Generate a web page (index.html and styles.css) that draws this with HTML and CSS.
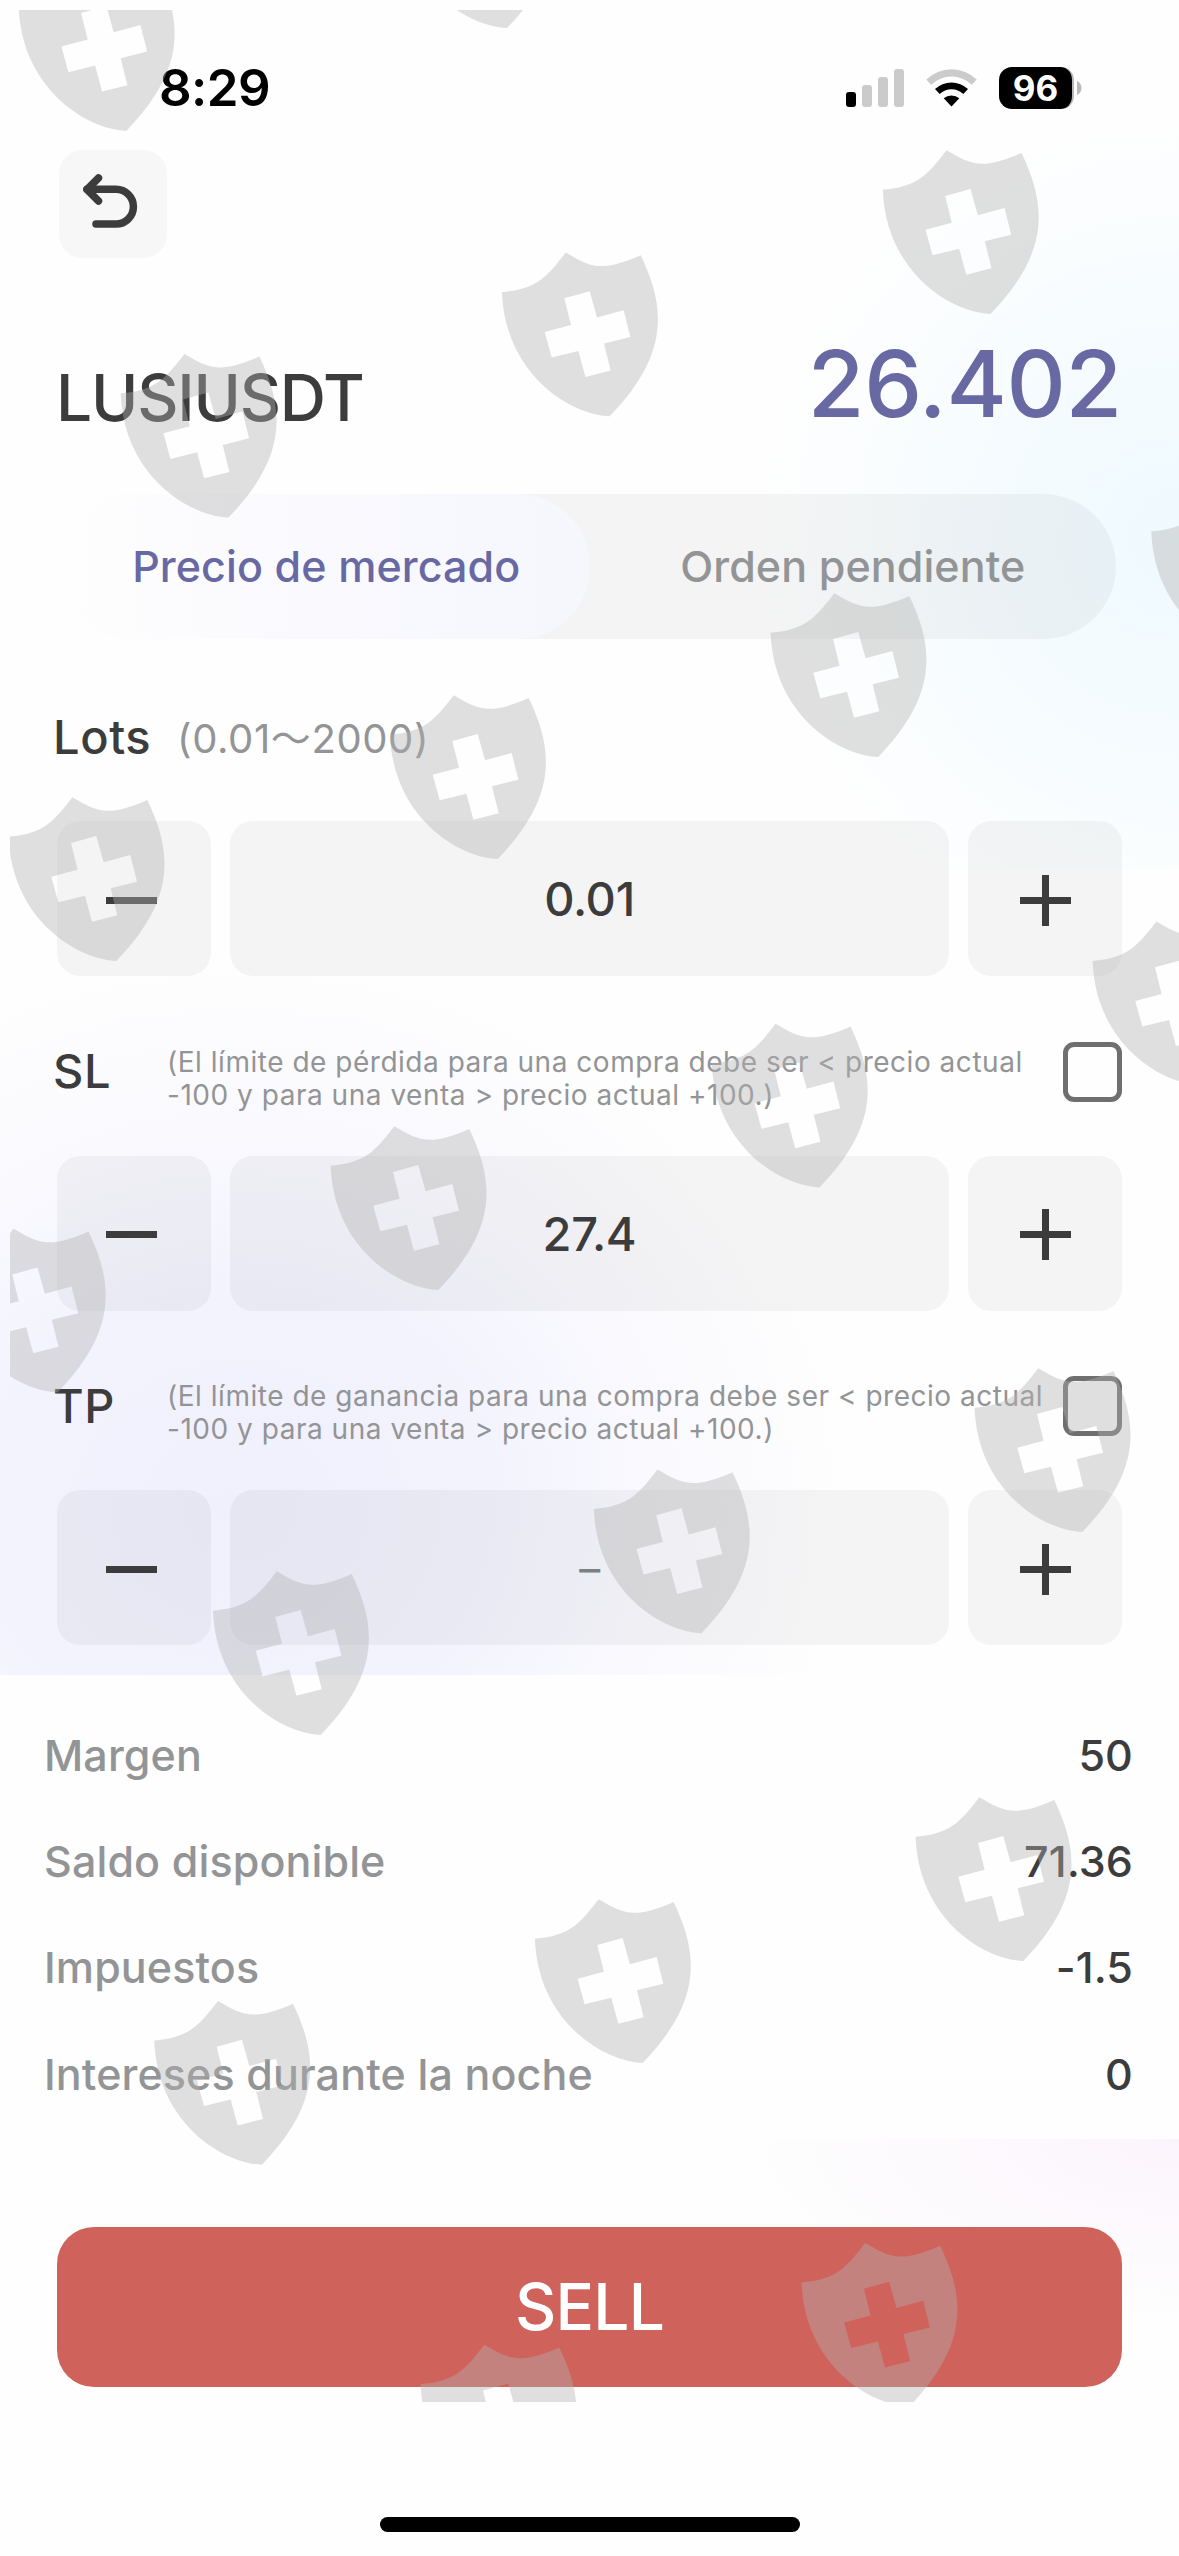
FILE: index.html
```html
<!DOCTYPE html>
<html lang="es">
<head>
	<meta charset="utf-8">
	<title>LUSIUSDT</title>
	<link rel="stylesheet" href="styles.css">
</head>
<body>
	<div class="page">
		<div class="status">
			<div class="time">8:29</div>
			<div class="status-icons">
				<svg width="58" height="38" viewBox="0 0 58 38">
					<rect x="0" y="23" width="10" height="15" rx="3" fill="#000"/>
					<rect x="16" y="16" width="10" height="22" rx="3" fill="#cbcbcb"/>
					<rect x="32" y="8" width="10" height="30" rx="3" fill="#cbcbcb"/>
					<rect x="48" y="0" width="10" height="38" rx="3" fill="#cbcbcb"/>
				</svg>
				<svg width="51" height="38" viewBox="0 0 51 38">
					<path d="M0.3 10.5A36 36 0 0 1 50.7 10.5L45.8 15.8A29 29 0 0 0 5.2 15.8Z" fill="#cbcbcb"/>
					<path d="M9 20A24 24 0 0 1 42 20L37.3 25A17 17 0 0 0 13.7 25Z" fill="#000"/>
					<path d="M17.7 29.3A12 12 0 0 1 33.3 29.3L25.5 37.5Z" fill="#000"/>
				</svg>
				<div class="battery">
					<span class="battery-level">96</span>
					<svg width="5" height="14" viewBox="0 0 5 14"><path d="M0 0C6 3 6 11 0 14Z" fill="#b9b9b9"/></svg>
				</div>
			</div>
		</div>

		<button class="back">
			<svg width="108" height="108" viewBox="59 150 108 108" fill="none" stroke="#3c3c3c" stroke-width="7.5" stroke-linecap="round" stroke-linejoin="round">
				<path d="M98.5 178L87 189.5L98.5 201"/>
				<path d="M87 189.3H116a17.3 17.3 0 0 1 0 34.8H96"/>
			</svg>
		</button>

		<div class="symbol-row">
			<div class="symbol">LUSIUSDT</div>
			<div class="price">26.402</div>
		</div>

		<div class="tabs">
			<div class="tab active">Precio de mercado</div>
			<div class="tab">Orden pendiente</div>
		</div>

		<div class="field-head lots-head">
			<div class="label">Lots</div>
			<div class="range">(0.01～2000)</div>
		</div>
		<div class="stepper">
			<button class="step minus"><svg width="51" height="51"><path d="M0 25.5H51" stroke="#3c3c3c" stroke-width="7"/></svg></button>
			<div class="value">0.01</div>
			<button class="step"><svg width="51" height="51"><path d="M0 25.5H51M25.5 0V51" stroke="#3c3c3c" stroke-width="7"/></svg></button>
		</div>

		<div class="field-head">
			<div class="label">SL</div>
			<div class="hint">(El límite de pérdida para una compra debe ser &lt; precio actual<br>-100 y para una venta &gt; precio actual +100.)</div>
			<div class="checkbox"></div>
		</div>
		<div class="stepper">
			<button class="step minus"><svg width="51" height="51"><path d="M0 25.5H51" stroke="#3c3c3c" stroke-width="7"/></svg></button>
			<div class="value">27.4</div>
			<button class="step"><svg width="51" height="51"><path d="M0 25.5H51M25.5 0V51" stroke="#3c3c3c" stroke-width="7"/></svg></button>
		</div>

		<div class="field-head">
			<div class="label">TP</div>
			<div class="hint">(El límite de ganancia para una compra debe ser &lt; precio actual<br>-100 y para una venta &gt; precio actual +100.)</div>
			<div class="checkbox"></div>
		</div>
		<div class="stepper">
			<button class="step minus"><svg width="51" height="51"><path d="M0 25.5H51" stroke="#3c3c3c" stroke-width="7"/></svg></button>
			<div class="value empty">–</div>
			<button class="step"><svg width="51" height="51"><path d="M0 25.5H51M25.5 0V51" stroke="#3c3c3c" stroke-width="7"/></svg></button>
		</div>

		<div class="summary">
			<div class="summary-row"><span>Margen</span><b>50</b></div>
			<div class="summary-row"><span>Saldo disponible</span><b>71.36</b></div>
			<div class="summary-row"><span>Impuestos</span><b>-1.5</b></div>
			<div class="summary-row"><span>Intereses durante la noche</span><b>0</b></div>
		</div>

		<button class="sell">SELL</button>
		<div class="home-bar"></div>

		<!-- shield watermark, every copy is placed by its bottom tip -->
		<svg class="watermark" width="1179" height="2556" viewBox="0 0 1179 2556">
			<defs>
				<clipPath id="area"><rect x="10" y="10" width="1169" height="2392"/></clipPath>
				<path id="shield" fill-rule="evenodd" d="M-107.7 -124.3C-73 -127 -63 -139 -44 -163.7C-20 -150 -10 -143 31 -161C56 -109 60 -62 0 0C-42 -2 -105 -44 -107.7 -124.3ZM-45.3 -118L-38.7 -91.3L-65 -84.3L-58 -58.7L-31.3 -65.3L-24.3 -39.3L1 -45.7L-5.7 -72.7L20.7 -79.3L14 -106L-12.7 -98.7L-20 -125Z"/>
			</defs>
			<g fill="#b2b2b2" fill-opacity="0.4" clip-path="url(#area)">
				<use href="#shield" x="126.4" y="130.9"/>
				<use href="#shield" x="507" y="28"/>
				<use href="#shield" x="228.4" y="517.6"/>
				<use href="#shield" x="609.7" y="416.3"/>
				<use href="#shield" x="990.5" y="314"/>
				<use href="#shield" x="116.3" y="961"/>
				<use href="#shield" x="497.7" y="859"/>
				<use href="#shield" x="878.3" y="757"/>
				<use href="#shield" x="1259" y="655.6"/>
				<use href="#shield" x="57.5" y="1392.5"/>
				<use href="#shield" x="438.3" y="1290"/>
				<use href="#shield" x="819.5" y="1187.5"/>
				<use href="#shield" x="1200.3" y="1085.3"/>
				<use href="#shield" x="320.7" y="1735"/>
				<use href="#shield" x="701.5" y="1633.3"/>
				<use href="#shield" x="1082.3" y="1532"/>
				<use href="#shield" x="262" y="2164.7"/>
				<use href="#shield" x="642.6" y="2063"/>
				<use href="#shield" x="1023.3" y="1961"/>
				<use href="#shield" x="528.3" y="2508.5"/>
				<use href="#shield" x="909.2" y="2406.7"/>
			</g>
		</svg>
	</div>
</body>
</html>
```
FILE: styles.css
```css
* {
	box-sizing: border-box;
}
body {
	margin: 0;
	background-color: #fff;
	color: #3c3c3c;
	font-family: Inter, "Noto Sans CJK SC", sans-serif;
	font-weight: 500;
}
button {
	border: none;
	padding: 0;
	font: inherit;
	color: inherit;
}
svg {
	display: block;
}
.page {
	position: relative;
	width: 1179px;
	height: 2556px;
	overflow: hidden;
	background-color: #fefefe;
	background-image:
		radial-gradient(ellipse 430px 430px at 430px 410px, #effafe 0%, #f4fbfe 40%, #fafdfe 70%, rgba(254, 254, 254, 0) 100%),
		radial-gradient(ellipse 610px 550px at 240px 550px, #f0f0fd 0%, #f3f3fe 40%, #fafafe 72%, rgba(254, 254, 254, 0) 100%),
		radial-gradient(ellipse 430px 180px at 430px 0, #fbf4fc 0%, rgba(254, 254, 254, 0) 100%);
	background-repeat: no-repeat;
	background-size: 430px 740px, 860px 715px, 430px 180px;
	background-position: 749px 130px, 0 960px, 749px 2139px;
}
.status {
	display: flex;
	justify-content: space-between;
	align-items: center;
	height: 150px;
	padding: 25px 97px 0 159px;
}
.time {
	color: #000;
	font-size: 51px;
	font-weight: 600;
	letter-spacing: -0.6px;
}
.status-icons {
	display: flex;
	align-items: center;
	gap: 22px;
}
.battery {
	display: flex;
	align-items: center;
	gap: 3px;
}
.battery-level {
	width: 75px;
	height: 42px;
	border-radius: 13px;
	border-right: 2px solid #b9b9b9;
	background-color: #000;
	color: #fff;
	font-size: 35px;
	font-weight: 700;
	line-height: 42px;
	text-align: center;
}
.back {
	display: block;
	width: 108px;
	height: 108px;
	margin-left: 59px;
	border-radius: 24px;
	background-color: #f7f7f7;
}
.symbol-row {
	display: flex;
	justify-content: space-between;
	height: 236px;
	padding: 75px 57px 0 56px;
}
.symbol {
	margin-top: 24px;
	font-size: 64px;
	line-height: 81px;
	font-weight: 450;
	letter-spacing: -1.2px;
}
.price {
	color: #6868a3;
	font-size: 92px;
	line-height: 101px;
	letter-spacing: -0.3px;
}
.tabs {
	display: flex;
	height: 145px;
	margin: 0 63px;
	border-radius: 73px;
	background-color: rgba(0, 0, 0, 0.039);
}
.tab {
	flex: 1;
	border-radius: 73px;
	color: #939496;
	font-size: 43px;
	line-height: 145px;
	letter-spacing: 0.1px;
	text-align: center;
}
.tab.active {
	color: #6868a3;
	background: linear-gradient(90deg, #fefefe, #f9f9fe 55%, #f5f7fd);
}
.field-head {
	display: flex;
	align-items: center;
	height: 179.5px;
	padding: 10px 57px 0 53px;
}
.lots-head {
	height: 182px;
	padding-top: 13px;
}
.label {
	flex: none;
	width: 114px;
	font-size: 47px;
	letter-spacing: 0.6px;
}
.range {
	margin-left: 10px;
	margin-top: -1px;
	color: #939496;
	font-size: 40px;
	font-weight: 400;
	letter-spacing: 0.6px;
}
.hint {
	margin-top: 16px;
	color: #939496;
	font-size: 28px;
	font-weight: 400;
	line-height: 33px;
	letter-spacing: 0.52px;
	white-space: nowrap;
}
.checkbox {
	flex: none;
	width: 59px;
	height: 60px;
	margin-left: auto;
	margin-top: 2px;
	border: 5px solid #6f6f6f;
	border-radius: 11px;
}
.stepper {
	display: flex;
	gap: 19px;
	height: 155px;
	padding: 0 57px;
}
.step, .value {
	border-radius: 23px;
	background-color: rgba(0, 0, 0, 0.039);
}
.step {
	display: flex;
	align-items: center;
	justify-content: center;
	width: 154px;
	padding-top: 3px;
}
.step.minus {
	padding-right: 5px;
}
.value {
	flex: 1;
	font-size: 47px;
	line-height: 155px;
	letter-spacing: -0.3px;
	text-align: center;
}
.value.empty {
	color: #7b8082;
	font-size: 42px;
	font-weight: 400;
	line-height: 158px;
}
.summary {
	padding: 57px 46px 0 44px;
}
.summary-row {
	display: flex;
	justify-content: space-between;
	height: 106.2px;
	color: #939496;
	font-size: 43px;
	line-height: 106px;
	letter-spacing: 0.12px;
}
.summary-row b {
	color: #3c3c3c;
	font-weight: 500;
}
.sell {
	display: block;
	width: 1065px;
	height: 160px;
	margin: 100px 57px 130px;
	border-radius: 37px;
	background-color: #cf635c;
	color: #fff;
	font-size: 64px;
	letter-spacing: -0.8px;
}
.home-bar {
	width: 420px;
	height: 15px;
	margin: 0 auto;
	border-radius: 8px;
	background-color: #000;
}
.watermark {
	position: absolute;
	top: 0;
	left: 0;
	pointer-events: none;
}
```
